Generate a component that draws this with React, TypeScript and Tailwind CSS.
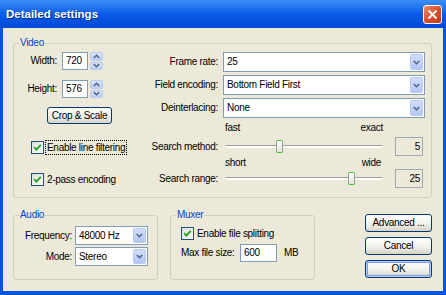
import React from "react";

function Chevron({ up = false }: { up?: boolean }) {
  return (
    <svg width="7" height="5" viewBox="0 0 7 5" className={up ? "rotate-180" : ""}>
      <path d="M0.8 1 L3.5 3.7 L6.2 1" fill="none" stroke="#4D6185" strokeWidth="1.5" />
    </svg>
  );
}

function Combo({ value, w, h = 20 }: { value: string; w: string; h?: number }) {
  return (
    <div
      className={`${w} flex items-stretch border border-[#7F9DB9] bg-white`}
      style={{ height: h }}
    >
      <div className="flex flex-1 items-center pl-[3px]">{value}</div>
      <div className="w-[15px] p-[1px]">
        <div className="flex h-full items-center justify-center rounded-[2px] border border-[#B9CAF3] bg-gradient-to-b from-[#D2DDFB] to-[#B3C6F4]">
          <Chevron />
        </div>
      </div>
    </div>
  );
}

function Spinner() {
  return (
    <div className="ml-[2px] flex h-[18px] w-[13px] flex-col gap-[1px]">
      <div className="flex flex-1 items-center justify-center rounded-[2px] border border-[#B9CAF3] bg-gradient-to-b from-[#D9E2FB] to-[#BCCDF6]">
        <Chevron up />
      </div>
      <div className="flex flex-1 items-center justify-center rounded-[2px] border border-[#B9CAF3] bg-gradient-to-b from-[#D9E2FB] to-[#BCCDF6]">
        <Chevron />
      </div>
    </div>
  );
}

function Check() {
  return (
    <div className="flex h-[13px] w-[13px] shrink-0 items-center justify-center border border-[#1C5180] bg-gradient-to-br from-[#DCDCD7] to-white">
      <svg width="9" height="9" viewBox="0 0 9 9">
        <path d="M1.2 4.2 L3.4 6.6 L7.8 1.8" fill="none" stroke="#21A121" strokeWidth="1.8" />
      </svg>
    </div>
  );
}

function Slider({ pos }: { pos: string }) {
  return (
    <div className="relative flex h-full w-[162px] items-center px-[2px]">
      <div className="h-[3px] w-full rounded-full border-t border-[#9D9C99] bg-white" />
      <div
        className={`absolute top-[3px] ${pos} h-[13px] w-[7px] rounded-[2px] border border-[#8F9B8B] border-t-[#3DC33D] border-b-[#3DC33D] bg-gradient-to-b from-white to-[#E6E5DD]`}
      />
    </div>
  );
}

function Button({ label, primary = false }: { label: string; primary?: boolean }) {
  return (
    <div
      className={`flex h-[18px] w-[67px] items-center justify-center rounded-[3px] border border-[#003C74] bg-gradient-to-b from-white via-[#F4F3EE] to-[#D8D3C8] ${
        primary ? "shadow-[inset_0_0_0_1px_#B6CBF5,inset_0_0_0_2px_#7D9EE6]" : ""
      }`}
    >
      {label}
    </div>
  );
}

function Group({ title, className, children }: { title: string; className: string; children: React.ReactNode }) {
  return (
    <div className={`relative rounded-[3px] border border-[#D0D0BF] ${className}`}>
      <span className="absolute -top-[7px] left-[5px] bg-[#ECE9D8] px-[1px] leading-[12px] text-[#0046D5]">
        {title}
      </span>
      {children}
    </div>
  );
}

export default function App() {
  return (
    <div className="flex h-[295px] w-[446px] flex-col overflow-hidden bg-[#0055E3] font-['Liberation_Sans',Arial,sans-serif] text-[10px] leading-[12px] tracking-[-0.3px] text-black">
      {/* title bar */}
      <div className="flex h-[28px] shrink-0 items-center justify-between bg-gradient-to-b from-[#3C8EF6] via-[#0A5BE8] to-[#0049D4] pl-[6px] pr-[4px]">
        <span className="text-[11.5px] font-bold tracking-normal text-white [text-shadow:1px_1px_0_#0B2A8A]">
          Detailed settings
        </span>
        <div className="flex h-[19px] w-[19px] items-center justify-center rounded-[3px] border border-white bg-gradient-to-br from-[#E98A6B] via-[#D9512B] to-[#BF3A16]">
          <svg width="11" height="11" viewBox="0 0 11 11">
            <path d="M1.5 1.5 L9.5 9.5 M9.5 1.5 L1.5 9.5" stroke="white" strokeWidth="2" />
          </svg>
        </div>
      </div>

      {/* body */}
      <div className="mx-[3px] mb-[4px] flex flex-1 flex-col bg-[#ECE9D8] pl-[10px] pt-[15px]">
        <Group title="Video" className="flex h-[155px] w-[419px]">
          {/* left column */}
          <div className="flex w-[116px] flex-col pt-[8px]">
            <div className="flex h-[18px] items-center">
              <span className="w-[43px] text-right">Width:</span>
              <div className="ml-[5px] flex h-[18px] w-[26px] items-center border border-[#7F9DB9] bg-white pl-[3px]">720</div>
              <Spinner />
            </div>
            <div className="mt-[10px] flex h-[18px] items-center">
              <span className="w-[43px] text-right">Height:</span>
              <div className="ml-[5px] flex h-[18px] w-[26px] items-center border border-[#7F9DB9] bg-white pl-[3px]">576</div>
              <Spinner />
            </div>
            <div className="ml-[33px] mt-[9px] flex h-[17px] w-[65px] items-center justify-center rounded-[3px] border border-[#003C74] bg-gradient-to-b from-white via-[#F4F3EE] to-[#D8D3C8]">
              Crop &amp; Scale
            </div>
            <div className="ml-[17px] mt-[16px] flex h-[15px] items-center">
              <Check />
              <span className="ml-[1px] border border-dotted border-black px-[1px] leading-[13px]">Enable line filtering</span>
            </div>
            <div className="ml-[17px] mt-[17px] flex h-[15px] items-center">
              <Check />
              <span className="ml-[3px]">2-pass encoding</span>
            </div>
          </div>

          {/* right column */}
          <div className="flex flex-col pt-[8px]">
            <div className="flex h-[20px] items-center">
              <span className="w-[88px] text-right">Frame rate:</span>
              <div className="ml-[5px]">
                <Combo value="25" w="w-[202px]" />
              </div>
            </div>
            <div className="mt-[3px] flex h-[20px] items-center">
              <span className="w-[88px] text-right">Field encoding:</span>
              <div className="ml-[5px]">
                <Combo value="Bottom Field First" w="w-[202px]" />
              </div>
            </div>
            <div className="mt-[3px] flex h-[20px] items-center">
              <span className="w-[88px] text-right">Deinterlacing:</span>
              <div className="ml-[5px]">
                <Combo value="None" w="w-[202px]" />
              </div>
            </div>

            <div className="ml-[95px] mt-[4px] flex h-[12px] w-[158px] justify-between">
              <span>fast</span>
              <span>exact</span>
            </div>
            <div className="mt-[3px] flex h-[19px] items-center">
              <span className="w-[88px] text-right">Search method:</span>
              <div className="ml-[5px] h-full">
                <Slider pos="left-[53px]" />
              </div>
              <div className="ml-[10px] flex h-[19px] w-[28px] items-center justify-end border border-[#9FA9B5] pr-[2px]">5</div>
            </div>

            <div className="ml-[95px] mt-[1px] flex h-[12px] w-[156px] justify-between">
              <span>short</span>
              <span>wide</span>
            </div>
            <div className="flex h-[19px] items-center">
              <span className="w-[88px] text-right">Search range:</span>
              <div className="ml-[5px] h-full">
                <Slider pos="left-[125px]" />
              </div>
              <div className="ml-[10px] flex h-[19px] w-[28px] items-center justify-end border border-[#9FA9B5] pr-[2px]">25</div>
            </div>
          </div>
        </Group>

        {/* bottom row */}
        <div className="mt-[16px] flex items-start">
          <Group title="Audio" className="mt-[1px] h-[65px] w-[145px] pt-[10px]">
            <div className="flex h-[19px] items-center">
              <span className="w-[58px] text-right">Frequency:</span>
              <div className="ml-[3px]">
                <Combo value="48000 Hz" w="w-[73px]" h={19} />
              </div>
            </div>
            <div className="mt-[2px] flex h-[19px] items-center">
              <span className="w-[58px] text-right">Mode:</span>
              <div className="ml-[3px]">
                <Combo value="Stereo" w="w-[73px]" h={19} />
              </div>
            </div>
          </Group>

          <Group title="Muxer" className="ml-[12px] mt-[1px] h-[65px] w-[145px] pl-[10px] pt-[11px]">
            <div className="flex h-[13px] items-center">
              <Check />
              <span className="ml-[3px]">Enable file splitting</span>
            </div>
            <div className="mt-[4px] flex h-[18px] items-center">
              <span className="w-[59px]">Max file size:</span>
              <div className="flex h-[18px] w-[37px] items-center border border-[#7F9DB9] bg-white pl-[3px]">600</div>
              <span className="ml-[7px]">MB</span>
            </div>
          </Group>

          <div className="ml-[50px] flex flex-col gap-[5px]">
            <Button label="Advanced ..." />
            <Button label="Cancel" />
            <Button label="OK" primary />
          </div>
        </div>
      </div>
    </div>
  );
}
